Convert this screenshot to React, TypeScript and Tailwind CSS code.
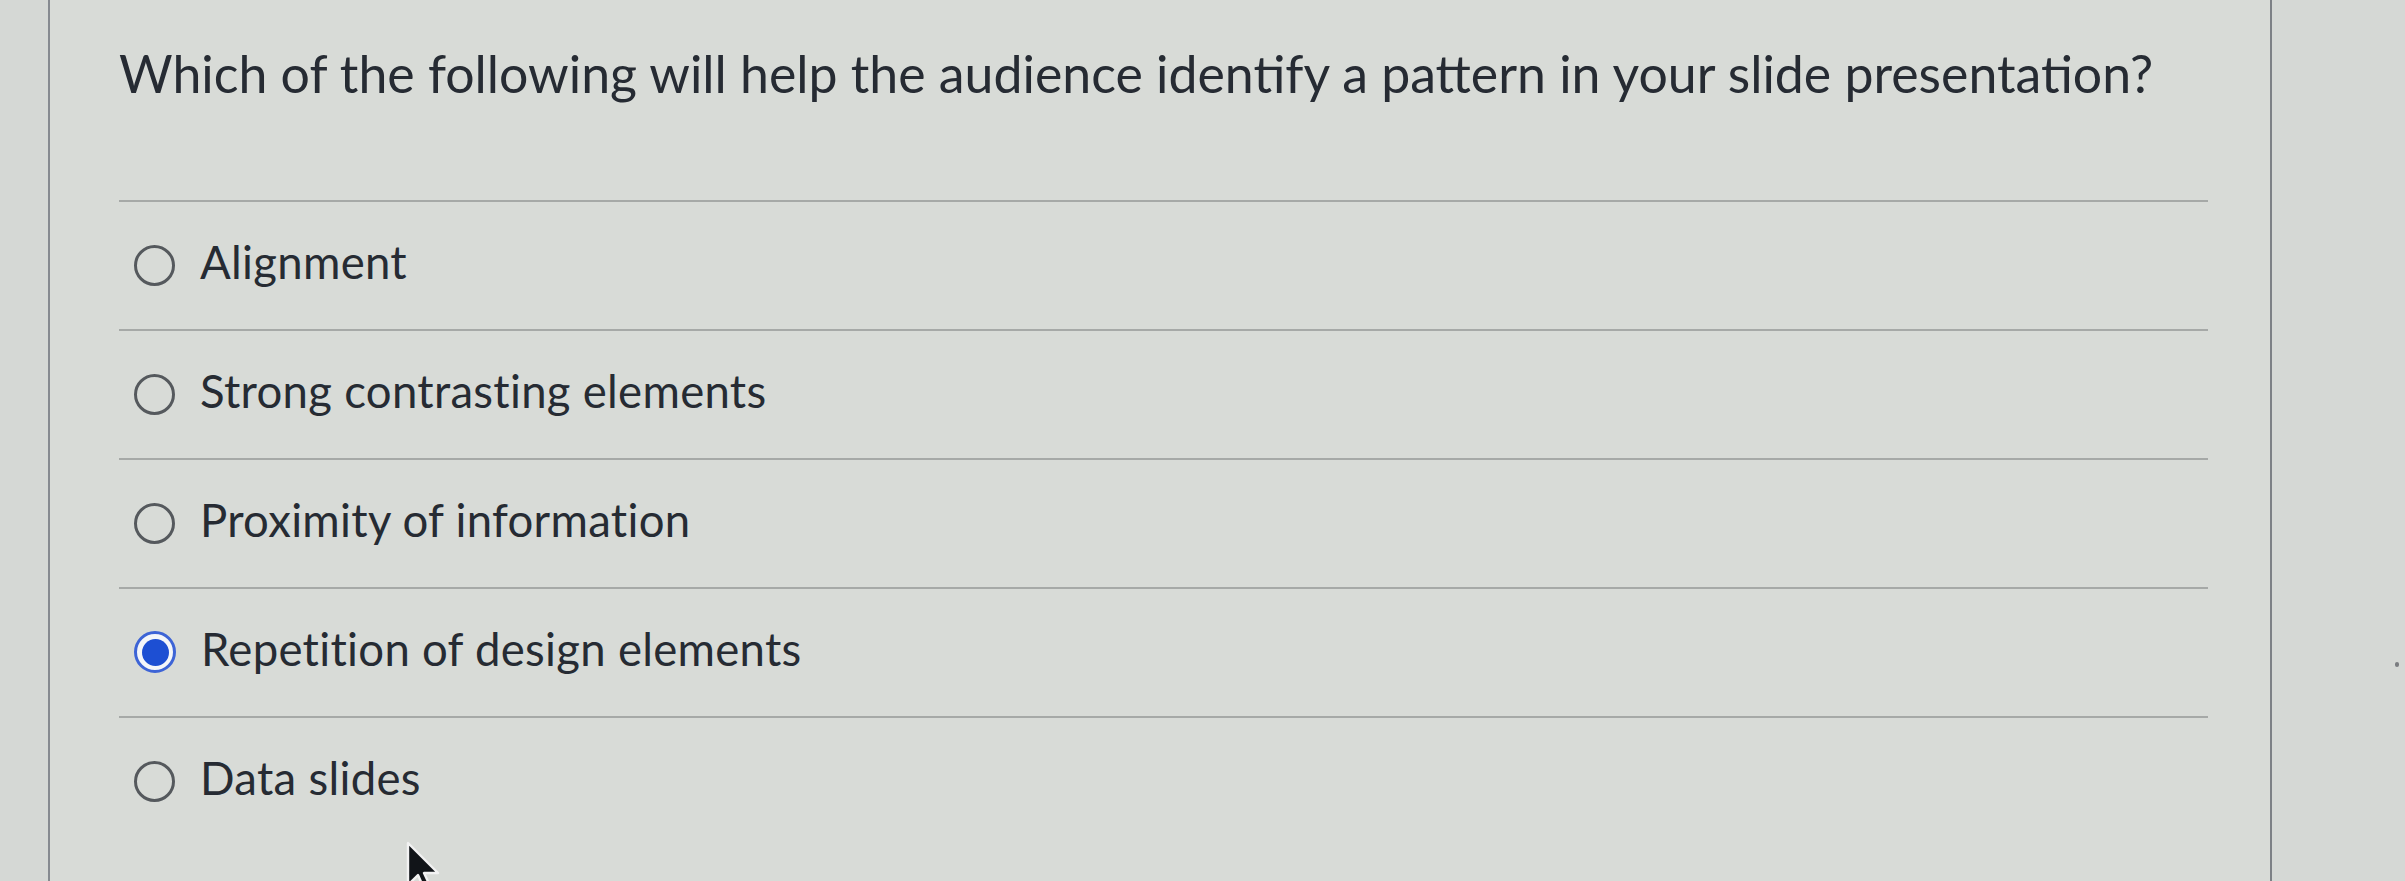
import { useState } from 'react';

const options = [
  'Alignment',
  'Strong contrasting elements',
  'Proximity of information',
  'Repetition of design elements',
  'Data slides',
];

function Radio({ checked }: { checked: boolean }) {
  if (checked) {
    return (
      <span className="flex h-[42px] w-[42px] shrink-0 items-center justify-center rounded-full border-[3px] border-[#3d64d6] bg-[#f4f6fa]">
        <span className="h-[27px] w-[27px] rounded-full bg-[#1d4fd3]" />
      </span>
    );
  }
  return <span className="h-[41px] w-[41px] shrink-0 rounded-full border-[3px] border-[#55595d]" />;
}

export default function App() {
  const [selected, setSelected] = useState(3);

  return (
    <div
      className="relative flex h-[881px] w-full overflow-hidden bg-[#d8dbd7] text-[#262b33]"
      style={{ fontFamily: 'Lato, "Open Sans", sans-serif' }}
    >
      <div className="w-[50px] shrink-0 border-r-2 border-[#868a90] bg-[#d5d8d5]" />

      <main className="flex-1 pl-[69px] pr-[62px]">
        <h1 className="pt-[48px] text-[51.8px] leading-none font-normal">
          Which of the following will help the audience identify a pattern in your slide presentation?
        </h1>

        <ul className="mt-[100px]">
          {options.map((label, i) => (
            <li key={label} className="h-[129px] border-t-2 border-[#a6a9a7]">
              <button
                type="button"
                onClick={() => setSelected(i)}
                className="flex h-full items-center gap-[25px] pl-[15px] text-left"
              >
                <Radio checked={selected === i} />
                <span className="pb-[8px] text-[45.5px] leading-none tracking-[0.3px]">{label}</span>
              </button>
            </li>
          ))}
        </ul>
      </main>

      <div className="relative w-[135px] shrink-0 border-l-2 border-[#7d8186] bg-[#d5d8d5]">
        <span className="absolute left-[123px] top-[662px] h-[5px] w-[4px] rounded-full bg-[#7a7d80]" />
      </div>

      {/* mouse pointer */}
      <svg
        className="absolute left-[404px] top-[841px]"
        width="40"
        height="56"
        viewBox="0 0 20 28"
      >
        <path
          d="M2 1 L2 22 L7 17 L11 26 L14 24.5 L10 16 L17 16 Z"
          fill="#111418"
          stroke="#f2f2f2"
          strokeWidth="1.2"
          strokeLinejoin="round"
        />
      </svg>
    </div>
  );
}
